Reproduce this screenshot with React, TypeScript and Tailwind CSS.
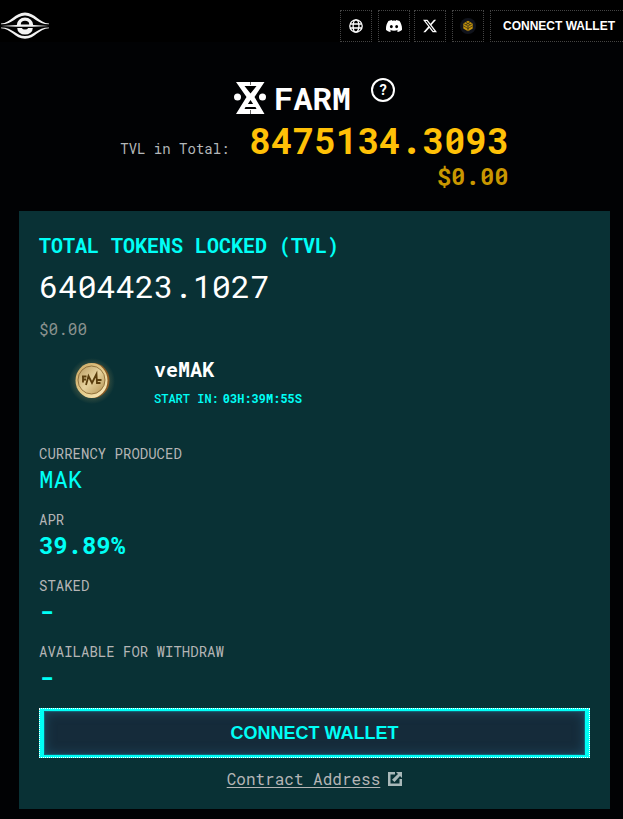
import type { ReactNode } from 'react';
import { BsDiscord, BsTwitterX } from 'react-icons/bs';

const stats = [
  { label: 'Currency produced', value: 'MAK', weight: 'font-normal' },
  { label: 'APR', value: '39.89%', weight: 'font-bold' },
  { label: 'Staked', value: '-', weight: 'font-bold' },
  { label: 'Available for withdraw', value: '-', weight: 'font-bold' },
];

function Logo() {
  return (
    <svg className="w-[50px] h-8" viewBox="0 0 50 32" fill="#f2f2f2">
      <path d="M1 13.500C11 13 15 2.500 25 2.500S39 13 49 13.500v.8C37 14.500 34 5.400 25 5.400S13 14.500 1 14.300z" />
      <path d="M1 18.300C11 18.600 15 28.800 25 28.800s14-10.200 24-10.500v-.8C37 17.500 34 26 25 26S13 17.500 1 17.500z" />
      <path d="M1 15.900L16.800 15a8.200 7.600 0 0 1 16.400 0l15.800.9-16 .8H17z" />
      <path d="M20.800 14.500a4.200 3.700 0 0 1 8.400 0z" fill="#000" />
      <path d="M17.200 18h4.600a3.400 2.400 0 0 0 6.400 0h4.600a7.800 6.600 0 0 1-15.600 0z" />
    </svg>
  );
}

function GlobeIcon() {
  return (
    <svg className="w-[14px] h-[14px]" viewBox="0 0 14 14" fill="none" stroke="#fff" strokeWidth="1.3">
      <circle cx="7" cy="7" r="6.200" />
      <ellipse cx="7" cy="7" rx="2.900" ry="6.200" />
      <path d="M1.200 5h11.600M1.200 9h11.600" />
    </svg>
  );
}

function CubeIcon() {
  return (
    <svg className="w-4 h-4" viewBox="0 0 16 16" fill="none">
      <circle cx="8" cy="8" r="8" fill="#10131c" />
      <path d="M8 2.800l4.700 2.600v5.200L8 13.200l-4.700-2.600V5.400z" fill="#c3930b" />
      <path
        d="M3.500 5.500L8 8l4.500-2.500M8 8v5M5.800 4.300l4.500 2.500M10.200 4.300L5.700 6.800M3.500 8l4.500 2.500L12.500 8"
        stroke="#10131c"
        strokeWidth=".6"
      />
    </svg>
  );
}

function FarmIcon() {
  return (
    <svg className="w-8 h-8" viewBox="0 0 32 32" fill="#fff">
      <path d="M2 0h28.500L20.500 15 30.500 32H2l10.500-17z" />
      <path d="M10.500 4h12l-6 7.500zM16.500 18l2.600 4h-5.200zM11.500 25h10l1 2h-12z" fill="#000" />
      <path d="M16.500 0v3M16.500 28v4" stroke="#000" strokeWidth=".6" />
      <circle cx="3.500" cy="15" r="3.500" />
      <circle cx="28.500" cy="15" r="3.500" />
    </svg>
  );
}

function Coin() {
  return (
    <svg className="w-12 h-12" viewBox="0 0 48 48">
      <defs>
        <radialGradient id="glow">
          <stop offset=".65" stopColor="#8f8a58" stopOpacity=".35" />
          <stop offset="1" stopColor="#8f8a58" stopOpacity="0" />
        </radialGradient>
        <linearGradient id="gold" x1="0" y1="0" x2="1" y2="1">
          <stop offset="0" stopColor="#c9a563" />
          <stop offset=".5" stopColor="#e3c988" />
          <stop offset="1" stopColor="#fff0c4" />
        </linearGradient>
        <linearGradient id="face" x1="0" y1="0" x2="1" y2="1">
          <stop offset="0" stopColor="#b8995e" />
          <stop offset=".5" stopColor="#e6d29d" />
          <stop offset="1" stopColor="#b3904f" />
        </linearGradient>
      </defs>
      <circle cx="23" cy="24" r="23" fill="url(#glow)" />
      <ellipse cx="24" cy="23.500" rx="16.500" ry="17.500" fill="#8a5a24" />
      <ellipse cx="22.500" cy="23.500" rx="16" ry="17.500" fill="url(#gold)" />
      <ellipse cx="22.500" cy="23" rx="13.500" ry="14" fill="url(#face)" stroke="#80602c" strokeWidth=".8" />
      <path
        d="M17 28l2.500-9 3.500 7 4.500-9 .5 10M13 19.500h4.500M13.500 22.500h3.500M14 19.500v6M28 23h4.500M28 26h3.500"
        fill="none"
        stroke="#5b3e0d"
        strokeWidth="1.800"
      />
    </svg>
  );
}

function ExternalIcon() {
  return (
    <svg className="w-[14px] h-[14px]" viewBox="0 0 14 14" fill="#a9b8b9">
      <path d="M0 0h7v2.500H2.500v9h9V7H14v7H0z" />
      <path d="M8 0h6v6l-2-2-5.500 6-2.500-2.300L10 2z" />
    </svg>
  );
}

function IconLink({ label, children }: { label: string; children: ReactNode }) {
  return (
    <a
      href="#"
      aria-label={label}
      className="flex w-8 h-8 items-center justify-center border border-dotted border-[#444]"
    >
      {children}
    </a>
  );
}

function FarmHeading() {
  return (
    <div className="flex items-center justify-center gap-2">
      <FarmIcon />
      <h1 className="text-[32px] leading-10 font-bold">FARM</h1>
      <button
        aria-label="Help"
        className="w-6 h-6 ml-3 mb-4 rounded-full border-2 border-white text-sm leading-5 font-bold"
      >
        ?
      </button>
    </div>
  );
}

export default function App() {
  return (
    <div className="min-h-screen overflow-hidden bg-[#010204] pb-2.5 font-['Roboto_Mono','DejaVu_Sans_Mono',monospace] text-white">
      <header className="flex items-center justify-between pt-2.5 bg-black">
        <a href="#" aria-label="Home">
          <Logo />
        </a>
        <nav className="flex gap-1">
          <div className="flex gap-1.5">
            <IconLink label="Website">
              <GlobeIcon />
            </IconLink>
            <IconLink label="Discord">
              <BsDiscord className="w-4 h-4" />
            </IconLink>
          </div>
          <div className="flex gap-1.5">
            <IconLink label="X">
              <BsTwitterX className="w-[14px] h-[14px]" />
            </IconLink>
            <IconLink label="Network">
              <CubeIcon />
            </IconLink>
            <button className="h-8 pl-3 pr-2 border border-r-0 border-dotted border-[#444] font-['Liberation_Sans',Arial,sans-serif] text-xs font-bold whitespace-nowrap">
              CONNECT WALLET
            </button>
          </div>
        </nav>
      </header>

      <main className="pl-[19px] pr-[13px] pt-9">
        <FarmHeading />

        <div className="flex justify-center gap-5 mt-0.5">
          <span className="mt-[19px] text-sm leading-5 text-[#b4b7b9]">TVL in Total:</span>
          <div className="text-right font-bold">
            <p className="text-4xl leading-10 text-[#ffc107]">8475134.3093</p>
            <p className="text-2xl leading-8 text-[#c99700]">$0.00</p>
          </div>
        </div>

        <section className="mt-[19px] p-5 bg-[#093135]">
          <h2 className="text-xl leading-7 font-bold text-[#00fff6]">TOTAL TOKENS LOCKED (TVL)</h2>
          <p className="mt-[7px] text-[32px] leading-10">6404423.1027</p>
          <p className="mt-[11px] text-base leading-6 text-[#8a918e]">$0.00</p>

          <div className="flex items-center gap-2 mt-3.5">
            <div className="flex w-[107px] justify-center">
              <Coin />
            </div>
            <div>
              <h3 className="text-xl leading-7 font-bold">veMAK</h3>
              <p className="flex gap-1 mt-[7px] text-xs leading-4 font-medium text-[#00fff6]">
                START IN:<b>03H:39M:55S</b>
              </p>
            </div>
          </div>

          <dl className="flex flex-col gap-4 mt-[39px]">
            {stats.map((stat) => (
              <div key={stat.label}>
                <dt className="text-sm leading-[18px] uppercase text-[#b5b5b5]">{stat.label}</dt>
                <dd className={`text-2xl leading-8 text-[#00fff6] ${stat.weight}`}>{stat.value}</dd>
              </div>
            ))}
          </dl>

          <button className="w-full h-[50px] mt-[15px] border border-dotted border-white bg-[#00fff6] px-1 py-0.5">
            <span className="flex h-full items-center justify-center bg-[#152b3a] shadow-[inset_0_0_12px_#20516a,inset_0_0_1px_1px_#087f8c] font-['Liberation_Sans',Arial,sans-serif] text-lg font-bold text-[#00fff6]">
              CONNECT WALLET
            </span>
          </button>

          <div className="flex items-center justify-center gap-2 mt-[11px]">
            <a href="#" className="text-base leading-5 text-[#b5b5b5] underline underline-offset-2">
              Contract Address
            </a>
            <ExternalIcon />
          </div>
        </section>
      </main>
    </div>
  );
}
